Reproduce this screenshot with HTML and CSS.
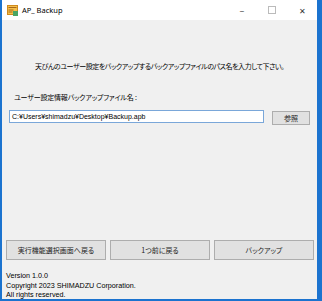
FILE: index.html
```html
<!DOCTYPE html>
<html lang="ja">
<head>
    <meta charset="UTF-8">
    <title>AP_ Backup</title>
    <link rel="stylesheet" href="styles.css">
</head>
<body>
    <div class="window">
        <div class="titlebar">
            <svg class="app-icon" width="11" height="11" viewBox="0 0 11 11">
                <rect x="0.5" y="0.5" width="10" height="9" fill="#f4c04a" stroke="#d08a1c"/>
                <rect x="1.5" y="2" width="8" height="1" fill="#a8661a"/>
                <rect x="1.5" y="4.5" width="5" height="1" fill="#a8661a"/>
                <rect x="1.5" y="6.5" width="4" height="1" fill="#a8661a"/>
                <rect x="6" y="6" width="5" height="5" fill="#4aa564"/>
            </svg>
            <span class="title">AP_ Backup</span>
            <div class="controls">
                <span class="ctl">&#8211;</span>
                <span class="ctl"><span class="max-box"></span></span>
                <span class="ctl close">&#10005;</span>
            </div>
        </div>

        <div class="content">
            <p class="desc">天びんのユーザー設定をバックアップするバックアップファイルのパス名を入力して下さい。</p>
            <p class="label">ユーザー設定情報バックアップファイル名 :</p>
            <div class="path-row">
                <div class="path-input">C:¥Users¥shimadzu¥Desktop¥Backup.apb</div>
                <button class="btn btn-small">参照</button>
            </div>

            <div class="actions">
                <button class="btn btn-wide">実行機能選択画面へ戻る</button>
                <button class="btn btn-wide">1つ前に戻る</button>
                <button class="btn btn-wide">バックアップ</button>
            </div>

            <div class="footer">
                <div>Version 1.0.0</div>
                <div>Copyright 2023 SHIMADZU Corporation.</div>
                <div>All rights reserved.</div>
            </div>
        </div>
    </div>
</body>
</html>
```

FILE: styles.css
```css
body {
    margin: 0;
    background-color: #1b73cf;
    font-family: "Noto Sans CJK JP", "Noto Sans", sans-serif;
}

.window {
    margin-left: 2px;
    width: 315px;
    height: 299px;
    background-color: #f0f0f0;
    display: flex;
    flex-direction: column;
}

/* title bar */
.titlebar {
    height: 20px;
    background-color: #ffffff;
    display: flex;
    align-items: center;
    flex-shrink: 0;
}
.app-icon {
    margin-left: 5px;
}
.title {
    margin-left: 4px;
    font-family: "Noto Sans", sans-serif;
    font-size: 7.5px;
    color: #000;
}
.controls {
    margin-left: auto;
    display: flex;
    height: 20px;
}
.ctl {
    width: 30px;
    display: flex;
    align-items: center;
    justify-content: center;
    font-size: 9px;
    color: #333;
}
.ctl.close {
    font-size: 8px;
}
.max-box {
    width: 6px;
    height: 6px;
    border: 1px solid #bbb;
}

/* body */
.content {
    flex: 1;
    display: flex;
    flex-direction: column;
    font-feature-settings: "palt";
}
.desc {
    margin: 40px 0 0;
    font-size: 7px;
    line-height: 12px;
    letter-spacing: -0.45px;
    text-align: center;
    color: #000;
}
.label {
    margin: 19px 0 0 12px;
    font-size: 7px;
    line-height: 12px;
    letter-spacing: -0.2px;
}
.path-row {
    margin-top: 7px;
    display: flex;
    align-items: flex-start;
}
.path-input {
    margin-left: 7px;
    width: 251px;
    height: 11px;
    border: 1px solid #7aa7d9;
    background-color: #fff;
    font-family: "Liberation Sans", sans-serif;
    font-size: 7px;
    line-height: 11px;
    padding-left: 2px;
}
.btn {
    background-color: #e1e1e1;
    border: 1px solid #adadad;
    font-family: "Noto Sans CJK JP", sans-serif;
    font-feature-settings: "palt";
    color: #222;
    padding: 0;
}
.btn-small {
    margin: 1px 0 0 8px;
    width: 38px;
    height: 14px;
    font-size: 7px;
}
.actions {
    margin-top: auto;
    display: flex;
    gap: 4px;
    padding-left: 4px;
}
.btn-wide {
    width: 100px;
    height: 20px;
    font-size: 7px;
}
.footer {
    margin: 11px 0 0 4px;
    height: 28px;
    font-family: "Liberation Sans", sans-serif;
    font-size: 7.2px;
    line-height: 9.5px;
    color: #000;
}
```
